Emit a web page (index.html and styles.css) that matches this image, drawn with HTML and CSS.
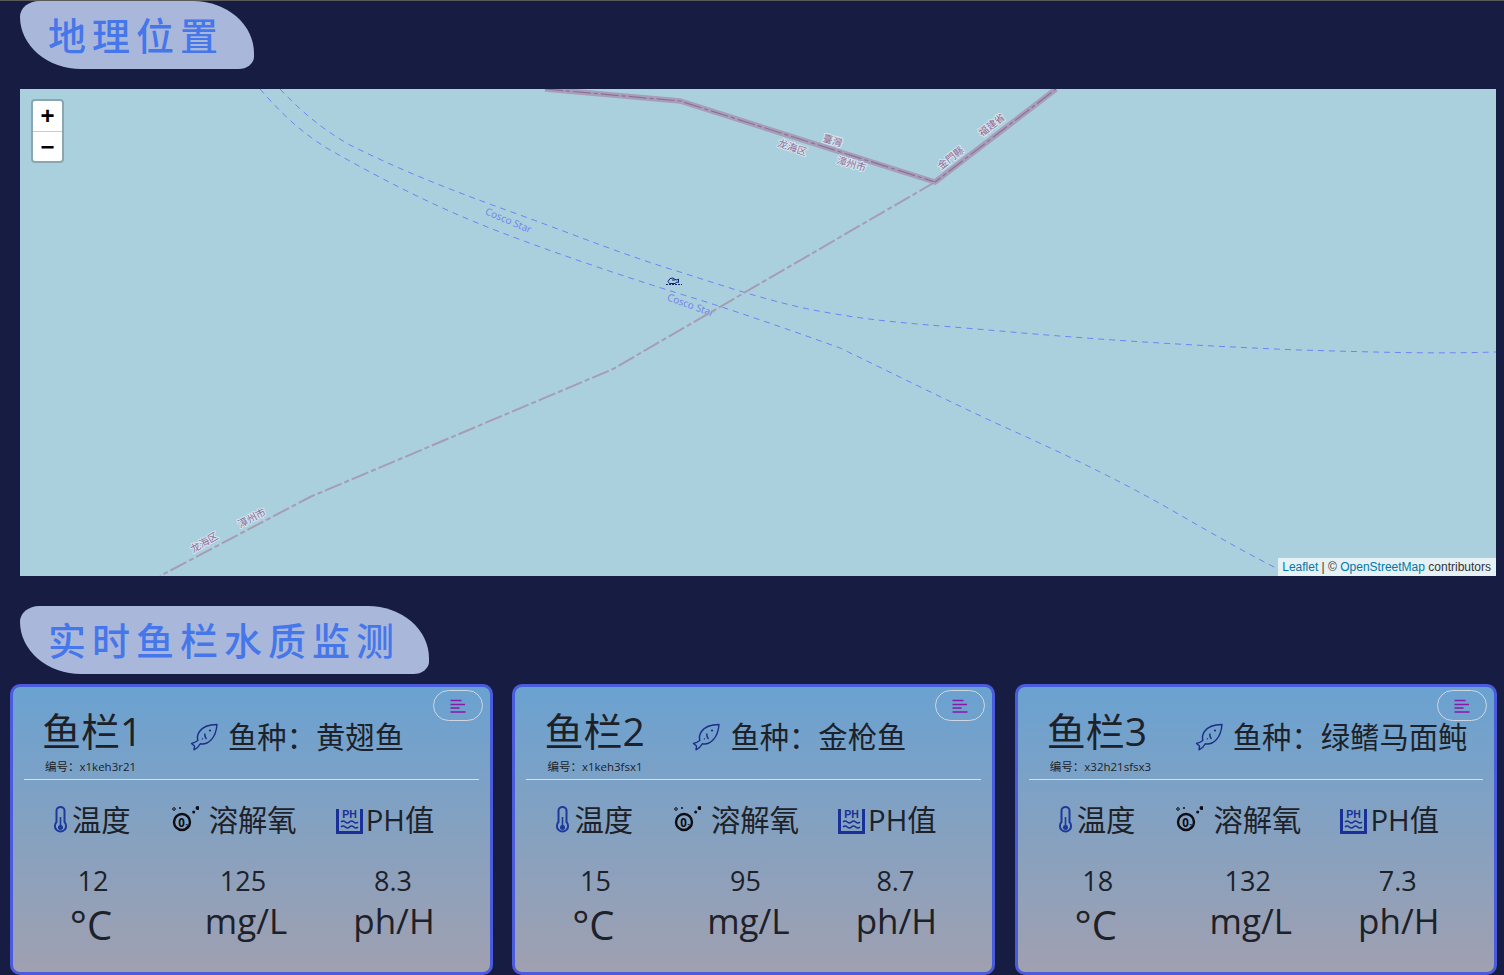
FILE: index.html
```html
<!DOCTYPE html>
<html lang="zh-CN">
<head>
<meta charset="utf-8">
<title>实时鱼栏水质监测</title>
<link rel="stylesheet" href="styles.css">
</head>
<body>
<header class="pill"><h2>地理位置</h2></header>

<section class="map">
  <svg class="map-canvas" viewBox="20 89 1476 487" aria-label="地图">
    <g class="tracks">
      <path d="M280 89C300 110 320 128 350 145C400 170 450 190 520 215C580 237 630 257 680 272C730 288 780 305 830 313C880 322 920 324 1000 331C1100 340 1200 346 1300 350C1370 352 1430 354 1496 352"/>
      <path d="M260 89C280 112 300 132 330 150C380 178 430 205 500 232C560 255 640 282 700 300C750 316 790 330 840 348C890 372 950 402 1000 425C1060 452 1120 480 1180 515C1220 538 1250 555 1280 570"/>
    </g>
    <text class="ship" transform="translate(484.500 214) rotate(23)">Cosco Star</text>
    <text class="ship" transform="translate(666.500 300) rotate(20)">Cosco Star</text>
    <polyline class="b-wide" points="545,89 680,101 935,182 1056,89"/>
    <polyline class="b-dash" points="545,89 680,101 935,182 1056,89"/>
    <polyline class="b-thin" points="935,182 613,369 310,497 160,576"/>
    <g class="vessel">
      <path d="M668 281.500l2-3 3-.500 2 1.500 2 .500 1.500-1v3.500l-1.500-.500-2 1.500h-5.500Z"/>
      <path d="M672 280h3"/>
      <path class="wave" d="M666 284.500h16"/>
    </g>
    <g class="place">
      <text transform="translate(822 141) rotate(17)">臺灣</text>
      <text transform="translate(777 146) rotate(19)">龙海区</text>
      <text transform="translate(836 163) rotate(17)">漳州市</text>
      <text transform="translate(941 170) rotate(-38)">金門縣</text>
      <text transform="translate(982 137) rotate(-38)">福建省</text>
      <text transform="translate(193 553) rotate(-30)">龙海区</text>
      <text transform="translate(240 528) rotate(-27)">漳州市</text>
    </g>
  </svg>
  <div class="zoom-ctl">
    <span class="zoom-btn">+</span>
    <span class="zoom-btn">−</span>
  </div>
  <div class="attrib"><a>Leaflet</a> | © <a>OpenStreetMap</a> contributors</div>
</section>

<header class="pill pill-second"><h2>实时鱼栏水质监测</h2></header>

<main class="cards">
  <article class="card">
    <button class="menu"><svg class="menu-ic" viewBox="0 0 16 14"><path class="mn" d="M.5 1.500h11M.5 5.500h14.500M.5 9h9M.5 13h15"/></svg></button>
    <div class="head">
      <div class="name-box">
        <h3 class="name">鱼栏1</h3>
        <p class="code">编号：x1keh3r21</p>
      </div>
      <div class="species"><svg class="fish" viewBox="0 0 28 28"><path class="fi" d="M27 1.500C26.500 8 24.500 13.500 21 17C18 20 14 21.500 10.300 20.800C9 23.500 6.500 25.500 4 26.800L4.500 23L1.500 20.500C3.500 20 6 19 7.800 17.500C7 14.500 7.500 11.500 9.500 8.500C13 3.500 20 1.500 27 1.500Z"/><path class="fi" d="M15 10.500C14.500 12.500 15 14.500 16.500 16M12 15.500l.8.800"/><circle class="fe" cx="20" cy="7.500" r="1.100"/></svg>鱼种：黄翅鱼</div>
    </div>
    <div class="labels">
      <div class="lab lab-t"><svg class="ic-t" viewBox="0 0 15 28"><path class="th" d="M3.500 16V4.500a4 3.500 0 0 1 8 0V16a5.600 5.600 0 1 1-8 0Z"/><path class="thf" d="M6.700 11h1.600v8a2.600 2.600 0 1 1-1.600 0Z"/></svg>温度</div>
      <div class="lab lab-o"><svg class="ic-o" viewBox="0 0 27 28"><circle class="o2" cx="10" cy="16" r="8"/><circle class="o2d" cx="25.500" cy="2" r="2"/><circle class="o2d" cx="21.700" cy="6" r="1.500"/><circle class="o2s" cx="2" cy="3" r="1.300"/><circle class="o2d" cx="8" cy="2" r="1"/><text class="o2t" x="6.300" y="20.500">0</text><text class="o2u" x="13.300" y="21.500">2</text></svg>溶解氧</div>
      <div class="lab lab-p"><svg class="ic-p" viewBox="0 0 27 28"><path class="pf" d="M0 3h3v22h21V3h3v25H0Z"/><text class="pt" x="13.500" y="12">PH</text><path class="pw" d="M5 16q2-2 4.300 0t4.200 0t4.200 0t4.300 0M5 21q2-2 4.300 0t4.200 0t4.200 0t4.300 0"/></svg>PH值</div>
    </div>
    <div class="values"><span>12</span><span>125</span><span>8.3</span></div>
    <div class="units"><span class="deg">°C</span><span>mg/L</span><span>ph/H</span></div>
  </article>
  <article class="card">
    <button class="menu"><svg class="menu-ic" viewBox="0 0 16 14"><path class="mn" d="M.5 1.500h11M.5 5.500h14.500M.5 9h9M.5 13h15"/></svg></button>
    <div class="head">
      <div class="name-box">
        <h3 class="name">鱼栏2</h3>
        <p class="code">编号：x1keh3fsx1</p>
      </div>
      <div class="species"><svg class="fish" viewBox="0 0 28 28"><path class="fi" d="M27 1.500C26.500 8 24.500 13.500 21 17C18 20 14 21.500 10.300 20.800C9 23.500 6.500 25.500 4 26.800L4.500 23L1.500 20.500C3.500 20 6 19 7.800 17.500C7 14.500 7.500 11.500 9.500 8.500C13 3.500 20 1.500 27 1.500Z"/><path class="fi" d="M15 10.500C14.500 12.500 15 14.500 16.500 16M12 15.500l.8.800"/><circle class="fe" cx="20" cy="7.500" r="1.100"/></svg>鱼种：金枪鱼</div>
    </div>
    <div class="labels">
      <div class="lab lab-t"><svg class="ic-t" viewBox="0 0 15 28"><path class="th" d="M3.500 16V4.500a4 3.500 0 0 1 8 0V16a5.600 5.600 0 1 1-8 0Z"/><path class="thf" d="M6.700 11h1.600v8a2.600 2.600 0 1 1-1.600 0Z"/></svg>温度</div>
      <div class="lab lab-o"><svg class="ic-o" viewBox="0 0 27 28"><circle class="o2" cx="10" cy="16" r="8"/><circle class="o2d" cx="25.500" cy="2" r="2"/><circle class="o2d" cx="21.700" cy="6" r="1.500"/><circle class="o2s" cx="2" cy="3" r="1.300"/><circle class="o2d" cx="8" cy="2" r="1"/><text class="o2t" x="6.300" y="20.500">0</text><text class="o2u" x="13.300" y="21.500">2</text></svg>溶解氧</div>
      <div class="lab lab-p"><svg class="ic-p" viewBox="0 0 27 28"><path class="pf" d="M0 3h3v22h21V3h3v25H0Z"/><text class="pt" x="13.500" y="12">PH</text><path class="pw" d="M5 16q2-2 4.300 0t4.200 0t4.200 0t4.300 0M5 21q2-2 4.300 0t4.200 0t4.200 0t4.300 0"/></svg>PH值</div>
    </div>
    <div class="values"><span>15</span><span>95</span><span>8.7</span></div>
    <div class="units"><span class="deg">°C</span><span>mg/L</span><span>ph/H</span></div>
  </article>
  <article class="card">
    <button class="menu"><svg class="menu-ic" viewBox="0 0 16 14"><path class="mn" d="M.5 1.500h11M.5 5.500h14.500M.5 9h9M.5 13h15"/></svg></button>
    <div class="head">
      <div class="name-box">
        <h3 class="name">鱼栏3</h3>
        <p class="code">编号：x32h21sfsx3</p>
      </div>
      <div class="species"><svg class="fish" viewBox="0 0 28 28"><path class="fi" d="M27 1.500C26.500 8 24.500 13.500 21 17C18 20 14 21.500 10.300 20.800C9 23.500 6.500 25.500 4 26.800L4.500 23L1.500 20.500C3.500 20 6 19 7.800 17.500C7 14.500 7.500 11.500 9.500 8.500C13 3.500 20 1.500 27 1.500Z"/><path class="fi" d="M15 10.500C14.500 12.500 15 14.500 16.500 16M12 15.500l.8.800"/><circle class="fe" cx="20" cy="7.500" r="1.100"/></svg>鱼种：绿鳍马面鲀</div>
    </div>
    <div class="labels">
      <div class="lab lab-t"><svg class="ic-t" viewBox="0 0 15 28"><path class="th" d="M3.500 16V4.500a4 3.500 0 0 1 8 0V16a5.600 5.600 0 1 1-8 0Z"/><path class="thf" d="M6.700 11h1.600v8a2.600 2.600 0 1 1-1.600 0Z"/></svg>温度</div>
      <div class="lab lab-o"><svg class="ic-o" viewBox="0 0 27 28"><circle class="o2" cx="10" cy="16" r="8"/><circle class="o2d" cx="25.500" cy="2" r="2"/><circle class="o2d" cx="21.700" cy="6" r="1.500"/><circle class="o2s" cx="2" cy="3" r="1.300"/><circle class="o2d" cx="8" cy="2" r="1"/><text class="o2t" x="6.300" y="20.500">0</text><text class="o2u" x="13.300" y="21.500">2</text></svg>溶解氧</div>
      <div class="lab lab-p"><svg class="ic-p" viewBox="0 0 27 28"><path class="pf" d="M0 3h3v22h21V3h3v25H0Z"/><text class="pt" x="13.500" y="12">PH</text><path class="pw" d="M5 16q2-2 4.300 0t4.200 0t4.200 0t4.300 0M5 21q2-2 4.300 0t4.200 0t4.200 0t4.300 0"/></svg>PH值</div>
    </div>
    <div class="values"><span>18</span><span>132</span><span>7.3</span></div>
    <div class="units"><span class="deg">°C</span><span>mg/L</span><span>ph/H</span></div>
  </article>
</main>
</body>
</html>
```
FILE: styles.css
```css
* { box-sizing: border-box; }
html, body { margin: 0; padding: 0; }
body {
  background: #161c42;
  border-top: 1px solid #5a5a5a;
  height: 975px;
  overflow: hidden;
  font-family: "Open Sans", "Noto Sans CJK SC", sans-serif;
  color: #1d2129;
}

.pill {
  width: fit-content;
  height: 68px;
  margin-left: 20px;
  padding: 0 30px 2px 28px;
  background: #a9b8da;
  border-radius: 22px 70px 18px 70px / 18px 60px 14px 60px;
  display: flex;
  align-items: center;
}
.pill h2 {
  margin: 0;
  font: 500 38px/44px "Noto Sans CJK SC", sans-serif;
  letter-spacing: 6px;
  color: #4677ea;
}
.pill-second { margin-top: 30px; padding-right: 29px; }

.map {
  position: relative;
  width: 1476px;
  height: 487px;
  margin: 20px 0 0 20px;
  background: #aad0de;
  overflow: hidden;
}
.map-canvas { display: block; width: 1476px; height: 487px; }
.tracks path { fill: none; stroke: #7480f6; stroke-width: 1; stroke-dasharray: 6 5; }
.ship { font: 10px "Open Sans", sans-serif; fill: #6f80ee; }
.b-wide { fill: none; stroke: #a79eb8; stroke-width: 5.500; }
.b-dash { fill: none; stroke: #8d6f9e; stroke-width: 1.200; stroke-dasharray: 18 3 4 3; }
.b-thin { fill: none; stroke: #a59db4; stroke-width: 2; stroke-dasharray: 18 3 5 3; }
.vessel path { fill: none; stroke: #12226e; stroke-width: 1; }
.vessel .wave { stroke-dasharray: 2 1; }
.place text {
  font: 10px "Noto Sans CJK SC", sans-serif;
  fill: #8a6a98;
  stroke: #d8e6ee;
  stroke-width: 2px;
  paint-order: stroke;
  stroke-linejoin: round;
}
.zoom-ctl {
  position: absolute;
  left: 11px;
  top: 10px;
  width: 33px;
  border: 2px solid #8aa6b0;
  border-radius: 4px;
  background: #fff;
  display: flex;
  flex-direction: column;
}
.zoom-btn {
  height: 30px;
  display: flex;
  align-items: center;
  justify-content: center;
  font: bold 24px/30px "Liberation Sans", sans-serif;
  color: #000;
}
.zoom-btn + .zoom-btn { border-top: 1px solid #ccc; }
.attrib {
  position: absolute;
  right: 0;
  bottom: 0;
  height: 18px;
  padding: 0 5px 0 4px;
  background: rgba(255, 255, 255, .7);
  font: 12px/18px "Liberation Sans", sans-serif;
  color: #333;
}
.attrib a { color: #0078a8; }

.cards {
  display: grid;
  grid-template-columns: repeat(3, 482.600px);
  gap: 19.800px;
  margin: 10px 0 0 10px;
}
.card {
  position: relative;
  height: 291px;
  border: 3px solid #4a5bdc;
  border-radius: 10px;
  background: linear-gradient(180deg, #6aa2d1 0%, #a0a0b0 100%);
}
.menu {
  position: absolute;
  top: 3px;
  right: 7px;
  width: 50px;
  height: 31px;
  padding: 0;
  border: 1px solid #cfd6e2;
  border-radius: 16px;
  background: transparent;
  display: flex;
  align-items: center;
  justify-content: center;
}
.menu-ic { width: 16px; height: 14px; }
.mn { fill: none; stroke: #8a18a8; stroke-width: 1.300; }

.head {
  display: flex;
  height: 93px;
  margin: 0 11px;
  padding-left: 20px;
  border-bottom: 1px solid #d4e2ee;
}
.name-box { width: 146px; padding-top: 20px; flex: none; }
.name { margin: 0 0 0 -2px; font: 400 39px/48px "Open Sans", "Noto Sans CJK SC", sans-serif; }
.code { margin: 4px 0 0 1px; font: 400 11.500px/16px "Open Sans", "Noto Sans CJK SC", sans-serif; }
.species {
  display: flex;
  align-items: center;
  height: 36px;
  margin-top: 32px;
  font-size: 29.330px;
  line-height: 36px;
  white-space: nowrap;
}
.fish { width: 28px; height: 28px; margin-right: 10px; }
.fi { fill: none; stroke: #1c2f86; stroke-width: 1.400; stroke-linejoin: round; }
.fe { fill: #1c2f86; }

.labels {
  display: flex;
  height: 36px;
  margin-top: 22px;
  padding-left: 40px;
  font-size: 29.330px;
  line-height: 36px;
}
.lab { display: flex; align-items: center; white-space: nowrap; }
.lab-o { margin-left: 41px; }
.lab-p { margin-left: 39px; }
.ic-t { width: 15px; height: 28px; margin-right: 4px; }
.ic-o { width: 27px; height: 28px; margin-right: 10px; }
.ic-p { width: 27px; height: 28px; margin-right: 3px; }
.th { fill: none; stroke: #1c3a9a; stroke-width: 2; }
.thf { fill: #1c3a9a; }
.o2 { fill: none; stroke: #0c0c14; stroke-width: 2.400; }
.o2d { fill: #0c0c14; }
.o2s { fill: none; stroke: #0c0c14; stroke-width: 1; }
.o2t { font: bold 11.500px "Open Sans", sans-serif; fill: #0c0c14; }
.o2u { font: bold 5px "Open Sans", sans-serif; fill: #0c0c14; }
.pf { fill: #1a3096; }
.pt { font: bold 10.500px "Liberation Sans", sans-serif; fill: #1a3096; text-anchor: middle; }
.pw { fill: none; stroke: #1a3096; stroke-width: 1.500; }

.values {
  display: grid;
  grid-template-columns: repeat(3, 150px);
  margin: 25px 0 0 5px;
  height: 36px;
  font-size: 27px;
  line-height: 36px;
  text-align: center;
}
.units {
  display: grid;
  grid-template-columns: 146px 164px 132px;
  margin: 0 0 0 5px;
  height: 44px;
  font-size: 35px;
  line-height: 44px;
  text-align: center;
}
.deg { font-size: 40px; line-height: 52px; }
```
